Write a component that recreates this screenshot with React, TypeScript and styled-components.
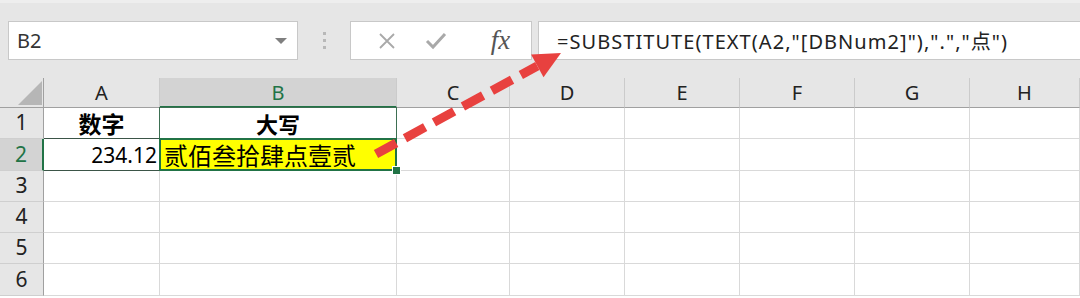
import React from 'react';
import styled, { createGlobalStyle, css } from 'styled-components';

const GlobalStyle = createGlobalStyle`
  html, body {
    margin: 0;
    padding: 0;
    background: #ffffff;
    overflow: hidden;
  }
`;

const green = '#217346';
const uiFont = `"Noto Sans", "Noto Sans CJK SC", sans-serif`;
const cjkFont = `"Noto Sans CJK SC", "Noto Sans", sans-serif`;

const Page = styled.div`
  position: relative;
  width: 1080px;
  height: 298px;
  overflow: hidden;
  font-family: ${uiFont};
`;

const FormulaToolbar = styled.div`
  box-sizing: border-box;
  height: 78px;
  display: flex;
  align-items: flex-start;
  padding: 18px 0 0 8px;
  border-top: 3px solid #eeeeee;
  background: #e6e6e6;
`;

const Field = styled.div`
  box-sizing: border-box;
  height: 39px;
  display: flex;
  align-items: center;
  background: #ffffff;
  border: 1px solid #c8c8c8;
`;

const NameBox = styled(Field)`
  width: 290px;
  justify-content: space-between;
  padding: 0 10px 0 8px;
  font-size: 20px;
  color: #333333;
`;

const DropCaret = styled.span`
  width: 0;
  height: 0;
  border-left: 6px solid transparent;
  border-right: 6px solid transparent;
  border-top: 6px solid #7f7f7f;
`;

const Grip = styled.div`
  width: 52px;
  height: 39px;
  display: flex;
  flex-direction: column;
  align-items: center;
  justify-content: center;
  gap: 4px;
`;

const GripDot = styled.span`
  width: 3px;
  height: 3px;
  background: #b8b8b8;
`;

const ActionBox = styled(Field)`
  width: 182px;
  margin-right: 6px;
  justify-content: space-around;
  padding: 0 6px 0 12px;
`;

const FxLabel = styled.span`
  font-family: "Liberation Serif", "DejaVu Serif", serif;
  font-style: italic;
  font-size: 27px;
  color: #555555;
  margin-left: 14px;
`;

const FormulaInput = styled(Field)`
  flex: 1;
  margin-right: -10px;
  padding-left: 18px;
  font-size: 20px;
  letter-spacing: 1.05px;
  color: #222222;
  white-space: nowrap;
`;

const Sheet = styled.div`
  display: grid;
  grid-template-columns: 44px 116px 237px 113px 115px 115px 115px 115px 110px;
  grid-template-rows: 30px 31px 32px 31px 31px 31px 32px;
  background: #ffffff;
`;

const Corner = styled.div`
  position: relative;
  background: #e6e6e6;
  border-right: 1px solid #a0a0a0;
  border-bottom: 1px solid #a0a0a0;

  &::after {
    content: '';
    position: absolute;
    left: 18px;
    top: 3px;
    width: 24px;
    height: 24px;
    background: #b6b6b6;
    clip-path: polygon(100% 0, 100% 100%, 0 100%);
  }
`;

const ColHeader = styled.div<{ $active?: boolean }>`
  display: flex;
  align-items: center;
  justify-content: center;
  background: #e6e6e6;
  border-right: 1px solid #cbcbcb;
  border-bottom: 1px solid #a0a0a0;
  font-size: 20px;
  color: #222222;
  ${(p) =>
    p.$active &&
    css`
      background: #d3d3d3;
      color: ${green};
      border-bottom: 2px solid ${green};
    `}
`;

const RowHeader = styled.div<{ $active?: boolean }>`
  display: flex;
  align-items: center;
  justify-content: center;
  background: #e6e6e6;
  border-right: 1px solid #a0a0a0;
  border-bottom: 1px solid #cfcfcf;
  font-size: 21px;
  line-height: 1.2;
  color: #222222;
  ${(p) =>
    p.$active &&
    css`
      background: #d3d3d3;
      color: ${green};
      border-right: 2px solid ${green};
    `}
`;

const Cell = styled.div<{
  $align?: 'left' | 'center' | 'right';
  $bold?: boolean;
  $edge?: 'row' | 'box';
  $selected?: boolean;
}>`
  position: relative;
  display: flex;
  align-items: center;
  justify-content: ${(p) =>
    p.$align === 'right' ? 'flex-end' : p.$align === 'center' ? 'center' : 'flex-start'};
  padding: 1px 4px 0;
  border-right: 1px solid #d9d9d9;
  border-bottom: 1px solid #d9d9d9;
  font-family: ${cjkFont};
  font-size: 23px;
  line-height: 1.15;
  font-weight: ${(p) => (p.$bold ? 700 : 400)};
  color: #000000;
  white-space: nowrap;
  ${(p) =>
    p.$edge === 'row' &&
    css`
      font-family: ${uiFont};
      font-size: 21px;
      padding: 2px 2px 0 4px;
      border-top: 1px solid #3b5547;
      border-bottom: 1px solid #3b5547;
      margin-top: -1px;
    `}
  ${(p) =>
    p.$edge === 'box' &&
    css`
      font-size: 22px;
      padding-top: 0;
      border: 1px solid #3d6f52;
      border-bottom: none;
      margin: -1px 0 0 -1px;
    `}
  ${(p) =>
    p.$selected &&
    css`
      z-index: 1;
      background: #ffff00;
      font-size: 24px;
      padding-top: 0;
      &::before {
        content: '';
        position: absolute;
        inset: -1px -1px -1px -1px;
        border: 2px solid ${green};
      }
      &::after {
        content: '';
        position: absolute;
        right: -5px;
        bottom: -5px;
        width: 7px;
        height: 7px;
        background: ${green};
        border: 1px solid #ffffff;
      }
    `}
`;

const ArrowOverlay = styled.svg`
  position: absolute;
  left: 0;
  top: 0;
  z-index: 2;
  pointer-events: none;
`;

const columns = ['A', 'B', 'C', 'D', 'E', 'F', 'G', 'H'];

const CloseIcon = () => (
  <svg width="18" height="18" viewBox="0 0 18 18">
    <path d="M2 2 L16 16 M16 2 L2 16" stroke="#a9a9a9" strokeWidth="1.8" fill="none" />
  </svg>
);

const CheckIcon = () => (
  <svg width="22" height="20" viewBox="0 0 22 20">
    <path d="M2 10 L8 16 L20 3" stroke="#a9a9a9" strokeWidth="3" fill="none" />
  </svg>
);

const Arrow = () => {
  const tail = { x: 376, y: 154 };
  const tip = { x: 561, y: 53 };
  const dx = tip.x - tail.x;
  const dy = tip.y - tail.y;
  const len = Math.hypot(dx, dy);
  const ux = dx / len;
  const uy = dy / len;
  const bx = tip.x - ux * 27;
  const by = tip.y - uy * 27;
  const w1 = `${bx + uy * -13},${by - ux * -13}`;
  const w2 = `${bx - uy * -13},${by + ux * -13}`;
  return (
    <ArrowOverlay width="1080" height="298" viewBox="0 0 1080 298">
      <line
        x1={tail.x}
        y1={tail.y}
        x2={bx}
        y2={by}
        stroke="#e8413f"
        strokeWidth="9"
        strokeDasharray="23 10"
      />
      <polygon points={`${tip.x},${tip.y} ${w1} ${w2}`} fill="#e8413f" />
    </ArrowOverlay>
  );
};

const App = () => {
  const rows = [1, 2, 3, 4, 5, 6];

  const renderCell = (row: number, col: number) => {
    const key = `${row}-${col}`;
    if (row === 1 && col === 0)
      return (
        <Cell key={key} $align="center" $bold>
          数字
        </Cell>
      );
    if (row === 1 && col === 1)
      return (
        <Cell key={key} $align="center" $bold $edge="box">
          大写
        </Cell>
      );
    if (row === 2 && col === 0)
      return (
        <Cell key={key} $align="right" $edge="row">
          234.12
        </Cell>
      );
    if (row === 2 && col === 1)
      return (
        <Cell key={key} $selected>
          贰佰叁拾肆点壹贰
        </Cell>
      );
    return <Cell key={key} />;
  };

  return (
    <Page>
      <GlobalStyle />
      <FormulaToolbar>
        <NameBox>
          B2
          <DropCaret />
        </NameBox>
        <Grip>
          <GripDot />
          <GripDot />
          <GripDot />
        </Grip>
        <ActionBox>
          <CloseIcon />
          <CheckIcon />
          <FxLabel>fx</FxLabel>
        </ActionBox>
        <FormulaInput>=SUBSTITUTE(TEXT(A2,"[DBNum2]"),".","点")</FormulaInput>
      </FormulaToolbar>
      <Sheet>
        <Corner />
        {columns.map((c) => (
          <ColHeader key={c} $active={c === 'B'}>
            {c}
          </ColHeader>
        ))}
        {rows.map((r) => (
          <React.Fragment key={r}>
            <RowHeader $active={r === 2}>{r}</RowHeader>
            {columns.map((_, i) => renderCell(r, i))}
          </React.Fragment>
        ))}
      </Sheet>
      <Arrow />
    </Page>
  );
};

export default App;
